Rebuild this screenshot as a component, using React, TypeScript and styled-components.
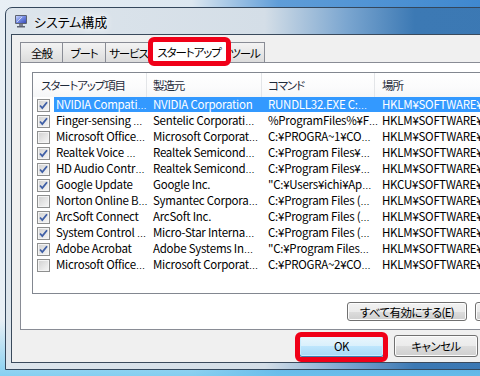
import React from "react";
import styled, { createGlobalStyle, css } from "styled-components";

const GlobalStyle = createGlobalStyle`
  html, body {
    margin: 0;
    padding: 0;
  }
  body {
    width: 480px;
    height: 376px;
    overflow: hidden;
    background:
      linear-gradient(to bottom, rgba(255,255,255,0) 85%, rgba(110,200,240,0.8) 100%),
      linear-gradient(to right, #e8eff5 0%, #dce7f0 40%, #5f9dd8 58%, #3f88cf 100%);
    font-family: "Noto Sans CJK JP", "Liberation Sans", sans-serif;
    font-size: 12px;
    color: #000;
    font-feature-settings: "palt";
  }
`;

// narrow kana, close to the proportional UI font of the original
const jp = css`
  font-size: 11.5px;
  letter-spacing: -1.1px;
`;

const Window = styled.div`
  width: max-content;
  margin: 7px 0 0 5px;
  padding: 0 5px 6px 5px;
  border: 1px solid #34475c;
  border-radius: 7px 7px 0 0;
  background: linear-gradient(to right, #dde5ec 0%, #d4dee7 38%, #7ba6d0 50%, #3c79b4 60%, #3a77b2 100%);
`;

const TitleBar = styled.div`
  height: 26px;
  display: flex;
  align-items: center;
  gap: 6px;
  padding-left: 3px;
`;

const Title = styled.span`
  font-size: 13px;
  text-shadow: 0 0 6px #fff, 0 0 10px #fff;
`;

const Client = styled.div`
  width: 661px;
  border: 1px solid #3a4a5c;
  background: #f0f0f0;
  padding: 7px 0 5px 8px;
`;

const TabStrip = styled.div`
  display: flex;
  align-items: flex-end;
  height: 20px;
`;

const Tab = styled.div<{ $w: number; $active?: boolean }>`
  ${jp};
  position: relative;
  width: ${(p) => p.$w}px;
  height: 20px;
  box-sizing: border-box;
  display: flex;
  align-items: center;
  justify-content: center;
  border: 1px solid #898c95;
  border-bottom: none;
  background: linear-gradient(#f3f3f3, #e8e8e8 50%, #dcdcdc);
  margin-left: -1px;
  &:first-child {
    margin-left: 0;
  }
  ${(p) =>
    p.$active &&
    css`
      height: 24px;
      margin: 0 -2px -1px -2px;
      padding-top: 1px;
      background: #fff;
      z-index: 2;
      &::after {
        content: "";
        position: absolute;
        top: -3px;
        left: -3px;
        right: -4px;
        bottom: -3px;
        border: 5px solid #f00018;
        border-radius: 6px;
      }
    `}
`;

const Panel = styled.div`
  width: 585px;
  background: #fff;
  border: 1px solid #898c95;
  padding: 9px 0 8px;
`;

const List = styled.div`
  margin: 0 11px;
  height: 220px;
  border: 1px solid #828790;
  background: #fff;
  overflow: hidden;
`;

const HeaderRow = styled.div`
  display: grid;
  grid-template-columns: 114px 115px 113px 1fr;
  height: 24px;
  background: linear-gradient(#ffffff, #fbfbfc 60%, #f5f6f7);
`;

const HeaderCell = styled.div<{ $pad: number }>`
  ${jp};
  display: flex;
  align-items: center;
  padding-left: ${(p) => p.$pad}px;
  border-right: 1px solid #e3e5e8;
  color: #1e2a3a;
  white-space: nowrap;
  overflow: hidden;
`;

const Row = styled.div`
  display: flex;
  height: 16px;
`;

const CheckCell = styled.div`
  width: 21px;
  flex: none;
  display: flex;
  align-items: center;
  padding-left: 4px;
  box-sizing: border-box;
`;

const RowBody = styled.div<{ $selected?: boolean }>`
  flex: 1;
  display: grid;
  grid-template-columns: 93px 115px 113px 1fr;
  margin-bottom: 1px;
  background: ${(p) => (p.$selected ? "#3399ff" : "transparent")};
  color: ${(p) => (p.$selected ? "#fff" : "#000")};
`;

// the list itself clips the last column at its right edge
const Cell = styled.div<{ $pad: number }>`
  padding-left: ${(p) => p.$pad}px;
  font-size: 11.5px;
  line-height: 15px;
  letter-spacing: -0.25px;
  white-space: nowrap;
`;

const Ellipsis = styled.span`
  font-family: "Liberation Sans", sans-serif;
  font-size: 9.5px;
  letter-spacing: 0;
`;

const Box = styled.div`
  width: 13px;
  height: 13px;
  box-sizing: border-box;
  border: 1px solid #8e8f8f;
  background: linear-gradient(135deg, #d0d0d0 0%, #e6e6e6 55%, #f7f7f7 100%);
  box-shadow: inset 0 0 0 1px #f4f4f4;
  display: flex;
  align-items: center;
  justify-content: center;
`;

const PanelButtons = styled.div`
  display: flex;
  justify-content: flex-end;
  gap: 8px;
  padding: 0 11px;
  margin-top: 8px;
`;

const BottomBar = styled.div`
  display: flex;
  justify-content: flex-end;
  gap: 10px;
  padding-right: 15px;
  margin-top: 5px;
`;

const Button = styled.div<{ $w: number; $h: number; $default?: boolean }>`
  ${jp};
  letter-spacing: -0.6px;
  position: relative;
  width: ${(p) => p.$w}px;
  height: ${(p) => p.$h}px;
  box-sizing: border-box;
  border: 1px solid #707070;
  border-radius: 3px;
  background: linear-gradient(#f2f2f2 0%, #ebebeb 50%, #dddddd 50%, #cfcfcf 100%);
  box-shadow: inset 0 0 0 1px #fcfcfc;
  display: flex;
  align-items: center;
  justify-content: center;
  white-space: nowrap;
  ${(p) =>
    p.$default &&
    css`
      border-color: #3c7fb1;
      background: linear-gradient(#eaf6fd 0%, #d9f0fc 50%, #bee6fd 50%, #a7d9f5 100%);
      box-shadow: inset 0 0 0 1px #c8ecfd;
      &::after {
        content: "";
        position: absolute;
        top: -4px;
        left: -5px;
        right: -5px;
        bottom: -6px;
        border: 5px solid #f00018;
        border-radius: 6px;
      }
    `}
`;

const AppIcon = () => (
  <svg width="14" height="14" viewBox="0 0 14 14">
    <defs>
      <linearGradient id="scr" x1="0" y1="0" x2="1" y2="1">
        <stop offset="0" stopColor="#c9d6ff" />
        <stop offset="0.5" stopColor="#6f86e0" />
        <stop offset="1" stopColor="#3b4cb8" />
      </linearGradient>
    </defs>
    <rect x="1" y="1" width="12" height="9" rx="1" fill="#5b6272" />
    <rect x="2" y="2" width="10" height="7" fill="url(#scr)" />
    <path d="M3 8 L8 3" stroke="#ffffff" strokeOpacity="0.6" strokeWidth="1" />
    <rect x="5" y="10" width="4" height="2" fill="#7b8090" />
    <rect x="3" y="12" width="8" height="1.5" fill="#5b6272" />
  </svg>
);

const Check = () => (
  <svg width="9" height="9" viewBox="0 0 9 9">
    <path d="M1 4.5 L3.3 7 L8 1.2" fill="none" stroke="#3f5fa6" strokeWidth="1.8" />
  </svg>
);

// cut strings end in "…"; draw that glyph with a latin font so the dots sit low
const Text = ({ value }: { value: string }) =>
  value.endsWith("…") ? (
    <>
      {value.slice(0, -1)}
      <Ellipsis>…</Ellipsis>
    </>
  ) : (
    <>{value}</>
  );

type Item = {
  name: string;
  maker: string;
  cmd: string;
  loc: string;
  on: boolean;
};

const HKLM = "HKLM¥SOFTWARE¥Microsoft¥Windows¥CurrentVersion¥Run";
const HKCU = "HKCU¥SOFTWARE¥Microsoft¥Windows¥CurrentVersion¥Run";

const items: Item[] = [
  { name: "NVIDIA Compati…", maker: "NVIDIA Corporation", cmd: "RUNDLL32.EXE C:…", loc: HKLM, on: true },
  { name: "Finger-sensing …", maker: "Sentelic Corporati…", cmd: "%ProgramFiles%¥F…", loc: HKLM, on: true },
  { name: "Microsoft Office…", maker: "Microsoft Corporat…", cmd: "C:¥PROGRA~1¥CO…", loc: HKLM, on: false },
  { name: "Realtek Voice  …", maker: "Realtek Semicond…", cmd: "C:¥Program Files¥…", loc: HKLM, on: true },
  { name: "HD Audio Contr…", maker: "Realtek Semicond…", cmd: "C:¥Program Files¥…", loc: HKLM, on: true },
  { name: "Google Update", maker: "Google Inc.", cmd: "\"C:¥Users¥ichi¥Ap…", loc: HKCU, on: true },
  { name: "Norton Online B…", maker: "Symantec Corpora…", cmd: "C:¥Program Files (…", loc: HKLM, on: false },
  { name: "ArcSoft Connect", maker: "ArcSoft Inc.", cmd: "C:¥Program Files (…", loc: HKLM, on: true },
  { name: "System Control …", maker: "Micro-Star Interna…", cmd: "C:¥Program Files (…", loc: HKLM, on: true },
  { name: "Adobe Acrobat", maker: "Adobe Systems In…", cmd: "\"C:¥Program Files…", loc: HKLM, on: true },
  { name: "Microsoft Office…", maker: "Microsoft Corporat…", cmd: "C:¥PROGRA~2¥CO…", loc: HKLM, on: false },
];

const tabs = [
  { label: "全般", w: 43 },
  { label: "ブート", w: 44 },
  { label: "サービス", w: 47 },
  { label: "スタートアップ", w: 78, active: true },
  { label: "ツール", w: 40 },
];

export default function App() {
  return (
    <>
      <GlobalStyle />
      <Window>
        <TitleBar>
          <AppIcon />
          <Title>システム構成</Title>
        </TitleBar>
        <Client>
          <TabStrip>
            {tabs.map((t) => (
              <Tab key={t.label} $w={t.w} $active={t.active}>
                {t.label}
              </Tab>
            ))}
          </TabStrip>
          <Panel>
            <List>
              <HeaderRow>
                <HeaderCell $pad={8}>スタートアップ項目</HeaderCell>
                <HeaderCell $pad={6}>製造元</HeaderCell>
                <HeaderCell $pad={6}>コマンド</HeaderCell>
                <HeaderCell $pad={7}>場所</HeaderCell>
              </HeaderRow>
              {items.map((it, i) => (
                <Row key={i}>
                  <CheckCell>
                    <Box>{it.on && <Check />}</Box>
                  </CheckCell>
                  <RowBody $selected={i === 0}>
                    <Cell $pad={2}><Text value={it.name} /></Cell>
                    <Cell $pad={6}><Text value={it.maker} /></Cell>
                    <Cell $pad={6}><Text value={it.cmd} /></Cell>
                    <Cell $pad={7}><Text value={it.loc} /></Cell>
                  </RowBody>
                </Row>
              ))}
            </List>
            <PanelButtons>
              <Button $w={120} $h={19}>すべて有効にする(E)</Button>
              <Button $w={120} $h={19}>すべて無効にする(D)</Button>
            </PanelButtons>
          </Panel>
          <BottomBar>
            <Button $w={85} $h={22} $default>OK</Button>
            <Button $w={84} $h={22}>キャンセル</Button>
            <Button $w={84} $h={22}>適用(A)</Button>
            <Button $w={84} $h={22}>ヘルプ</Button>
          </BottomBar>
        </Client>
      </Window>
    </>
  );
}
